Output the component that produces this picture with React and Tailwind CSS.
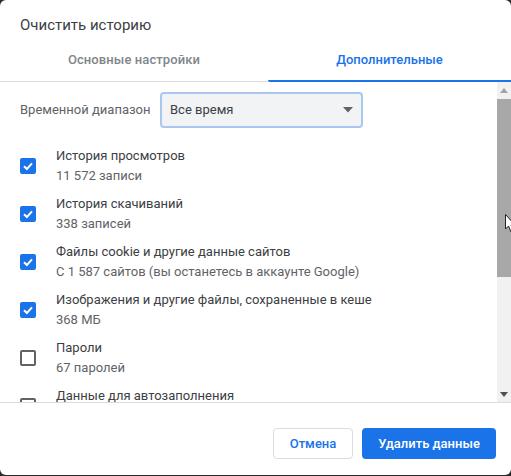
const rows = [
  { title: "История просмотров", sub: "11 572 записи", on: true },
  { title: "История скачиваний", sub: "338 записей", on: true },
  { title: "Файлы cookie и другие данные сайтов", sub: "С 1 587 сайтов (вы останетесь в аккаунте Google)", on: true },
  { title: "Изображения и другие файлы, сохраненные в кеше", sub: "368 МБ", on: true },
  { title: "Пароли", sub: "67 паролей", on: false },
  { title: "Данные для автозаполнения", sub: "", on: false },
];

function Checkbox({ on }) {
  if (!on) {
    return <div className="h-4 w-4 shrink-0 rounded-[2px] border-2 border-[#5f6368]" />;
  }
  return (
    <div className="flex h-4 w-4 shrink-0 items-center justify-center rounded-[2px] bg-[#1a73e8]">
      <svg width="12" height="12" viewBox="0 0 12 12" fill="none">
        <path d="M2 6.2 L4.9 9 L10 3.4" stroke="#fff" strokeWidth="2" />
      </svg>
    </div>
  );
}

export default function App() {
  return (
    <div className="h-[476px] w-[511px] overflow-hidden bg-[#2b2b2b] font-['Roboto',sans-serif]">
      <div className="relative flex h-[475px] flex-col overflow-hidden rounded-[6px] bg-white">
        {/* Title */}
        <div className="h-[45px] shrink-0 pl-5 pt-4 text-[15px] leading-[18px] text-[#3c4043]">Очистить историю</div>

        {/* Tabs */}
        <div className="flex h-[37px] shrink-0 border-b border-[#dadce0]">
          <div className="w-[268px] pt-[7px] text-center text-[13px] leading-[16px] font-medium tracking-[0.1px] text-[#80868b]">
            Основные настройки
          </div>
          <div className="-mb-px flex-1 rounded-bl-[2px] border-b-2 border-[#1a73e8] pt-[7px] text-center text-[13px] leading-[16px] font-medium text-[#1a73e8]">
            Дополнительные
          </div>
        </div>

        {/* Scrolling body */}
        <div className="flex h-[321px] shrink-0 border-b border-[#dadce0]">
          <div className="min-w-0 flex-1 overflow-hidden">
            <div className="flex items-center pl-5 pt-2.5">
              <div className="w-[140px] text-[13px] text-[#5f6368]">Временной диапазон</div>
              <div className="flex h-[36px] w-[203px] items-center justify-between rounded-[4px] border-2 border-[#a9c7f0] bg-[#f1f3f4] pl-2 pr-2 text-[13px] text-[#3c4043]">
                Все время
                <svg width="10" height="6" viewBox="0 0 10 6">
                  <path d="M0 0 H10 L5 5.5 Z" fill="#5f6368" />
                </svg>
              </div>
            </div>
            <div className="pt-[14px]">
              {rows.map((r) => (
                <div key={r.title} className="flex h-12 items-center pl-5">
                  <Checkbox on={r.on} />
                  <div className="pl-5 text-[13px] leading-5">
                    <div className="text-[#3c4043]">{r.title}</div>
                    <div className="min-h-5 text-[#5f6368]">{r.sub}</div>
                  </div>
                </div>
              ))}
            </div>
          </div>

          {/* Scrollbar */}
          <div className="flex w-[14px] shrink-0 flex-col bg-[#f1f1f1]">
            <div className="flex h-[17px] items-center justify-center">
              <svg width="8" height="5" viewBox="0 0 8 5"><path d="M4 0 L8 5 H0 Z" fill="#a3a3a3" /></svg>
            </div>
            <div className="h-[178px] bg-[#a8a8a8]" />
            <div className="flex-1" />
            <div className="flex h-[15px] items-center justify-center">
              <svg width="8" height="5" viewBox="0 0 8 5"><path d="M0 0 H8 L4 5 Z" fill="#505050" /></svg>
            </div>
          </div>
        </div>

        {/* Footer */}
        <div className="flex flex-1 items-start justify-end gap-[9px] pr-[15px] pt-[25px]">
          <div className="flex h-[31px] w-[80px] items-center justify-center rounded-[4px] border border-[#dadce0] bg-white text-[13px] font-medium text-[#1a73e8]">
            Отмена
          </div>
          <div className="flex h-[31px] w-[134px] items-center justify-center rounded-[4px] bg-[#1a73e8] text-[13px] font-medium text-white">
            Удалить данные
          </div>
        </div>

        {/* Mouse cursor */}
        <svg width="10" height="20" viewBox="0 0 10 20" className="absolute left-[505px] top-[214px]">
          <path d="M0.5 0.5 V15 L3.5 12 L6 18 L8.5 17 L6 11 H10 Z" fill="#fff" stroke="#222" strokeWidth="1" />
        </svg>
      </div>
    </div>
  );
}
